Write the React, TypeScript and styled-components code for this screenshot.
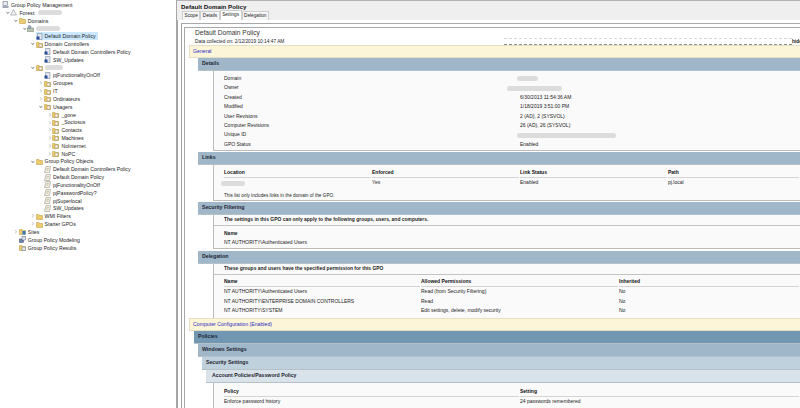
import React from "react";
import styled, { createGlobalStyle } from "styled-components";

const Global = createGlobalStyle`
  html, body { margin: 0; padding: 0; background: #fff; }
  body { font-family: "Liberation Sans", Arial, sans-serif; color: #1c1c1c; }
`;

const Shell = styled.div`
  display: flex;
  width: 800px;
  height: 408px;
  overflow: hidden;
`;

/* ---------- left tree ---------- */
const Tree = styled.div`
  flex: 0 0 176px;
  padding-top: 1px;
  border-right: 1px solid #a6a6a6;
  background: #fff;
`;

const Row = styled.div<{ $level: number }>`
  display: flex;
  align-items: center;
  height: 7.84px;
  padding-left: ${(p) => p.$level * 8.4 + 2}px;
  font-size: 5.2px;
  white-space: nowrap;
`;

const Chevron = styled.svg`
  flex: 0 0 5.6px;
  width: 5.6px;
  height: 5.6px;
  margin-left: -5.6px;
`;

const Label = styled.div<{ $selected?: boolean }>`
  display: flex;
  align-items: center;
  gap: 2px;
  height: 7.84px;
  padding-right: 2px;
  background: ${(p) => (p.$selected ? "#cce8ff" : "transparent")};
`;

const Smudge = styled.span<{ $w: number; $x?: number }>`
  display: inline-block;
  width: ${(p) => p.$w}px;
  height: 5px;
  margin-left: ${(p) => p.$x ?? 0}px;
  border-radius: 3px;
  background: #dcdcdc;
  filter: blur(0.7px);
`;

type IconKind = "console" | "forest" | "folder" | "domain" | "ou" | "link" | "gpo" | "sites" | "model" | "result";

const Icon = ({ kind }: { kind: IconKind }) => (
  <svg width="7" height="7" viewBox="0 0 14 14" style={{ flex: "0 0 7px" }}>
    {(kind === "folder" || kind === "ou" || kind === "sites" || kind === "result") && (
      <path d="M1 3h5l1 2h6v8H1z" fill="#eccb6d" stroke="#b8953a" />
    )}
    {kind === "ou" && <rect x="6" y="6" width="6" height="6" fill="#fff" stroke="#8a7a4a" />}
    {kind === "sites" && <rect x="7" y="6" width="6" height="7" fill="#2f78c4" />}
    {kind === "result" && <path d="M6 6h7v7H6z" fill="#e6e9ef" stroke="#5d6f8c" />}
    {kind === "console" && (
      <>
        <rect x="2" y="1" width="9" height="8" fill="#e8ebf0" stroke="#56657c" />
        <path d="M1 12h12" stroke="#43526a" strokeWidth="2" />
      </>
    )}
    {kind === "forest" && <path d="M7 1l6 11H1z" fill="#f1f1f1" stroke="#77808c" />}
    {kind === "domain" && (
      <>
        <path d="M1 6h12v7H1z" fill="#b8c6b4" stroke="#68775f" />
        <circle cx="5" cy="4" r="3" fill="#9fb2c9" stroke="#5d6f8c" />
      </>
    )}
    {kind === "link" && (
      <>
        <path d="M3 1h9v12H3z" fill="#e4e7ee" stroke="#66708a" />
        <rect x="1" y="7" width="6" height="6" fill="#2b4a9b" />
      </>
    )}
    {kind === "gpo" && (
      <>
        <path d="M4 1h9l-2 12H1z" fill="#f3efe0" stroke="#8d8a7d" />
        <path d="M5 5h5M4 8h5" stroke="#a09c8b" />
      </>
    )}
    {kind === "model" && (
      <>
        <rect x="1" y="6" width="8" height="7" fill="#7183a8" stroke="#3a4a6e" />
        <rect x="6" y="1" width="7" height="7" fill="#dfe4ec" stroke="#4f5f80" />
      </>
    )}
  </svg>
);

type Node = { level: number; icon: IconKind; text?: string; chevron?: "open" | "closed"; blur?: number; selected?: boolean };

const nodes: Node[] = [
  { level: 0, icon: "console", text: "Group Policy Management" },
  { level: 1, icon: "forest", text: "Forest:", chevron: "open", blur: 24 },
  { level: 2, icon: "folder", text: "Domains", chevron: "open" },
  { level: 3, icon: "domain", chevron: "open", blur: 24 },
  { level: 4, icon: "link", text: "Default Domain Policy", selected: true },
  { level: 4, icon: "ou", text: "Domain Controllers", chevron: "open" },
  { level: 5, icon: "link", text: "Default Domain Controllers Policy" },
  { level: 5, icon: "link", text: "SW_Updates" },
  { level: 4, icon: "ou", chevron: "open", blur: 18 },
  { level: 5, icon: "link", text: "pjFunctionalityOnOff" },
  { level: 5, icon: "ou", text: "Groupes", chevron: "closed" },
  { level: 5, icon: "ou", text: "IT", chevron: "closed" },
  { level: 5, icon: "ou", text: "Ordinateurs", chevron: "closed" },
  { level: 5, icon: "ou", text: "Usagers", chevron: "open" },
  { level: 6, icon: "ou", text: "_gone", chevron: "closed" },
  { level: 6, icon: "ou", text: "_Sociosus", chevron: "closed" },
  { level: 6, icon: "ou", text: "Contacts", chevron: "closed" },
  { level: 6, icon: "ou", text: "Machines", chevron: "closed" },
  { level: 6, icon: "ou", text: "NoInternet", chevron: "closed" },
  { level: 6, icon: "ou", text: "NoPC", chevron: "closed" },
  { level: 4, icon: "folder", text: "Group Policy Objects", chevron: "open" },
  { level: 5, icon: "gpo", text: "Default Domain Controllers Policy" },
  { level: 5, icon: "gpo", text: "Default Domain Policy" },
  { level: 5, icon: "gpo", text: "pjFunctionalityOnOff" },
  { level: 5, icon: "gpo", text: "pjPasswordPolicy?" },
  { level: 5, icon: "gpo", text: "pjSuperlocal" },
  { level: 5, icon: "gpo", text: "SW_Updates" },
  { level: 4, icon: "folder", text: "WMI Filters", chevron: "closed" },
  { level: 4, icon: "folder", text: "Starter GPOs", chevron: "closed" },
  { level: 2, icon: "sites", text: "Sites", chevron: "closed" },
  { level: 2, icon: "model", text: "Group Policy Modeling" },
  { level: 2, icon: "result", text: "Group Policy Results" },
];

const TreeRow = ({ node }: { node: Node }) => (
  <Row $level={node.level}>
    {node.chevron && (
      <Chevron viewBox="0 0 12 12">
        {node.chevron === "open" ? (
          <path d="M3 4l3 4 3-4" fill="none" stroke="#555" strokeWidth="1.4" />
        ) : (
          <path d="M4 2.5l4 3.5-4 3.5" fill="none" stroke="#aaa" strokeWidth="1.4" />
        )}
      </Chevron>
    )}
    <Label $selected={node.selected}>
      <Icon kind={node.icon} />
      {node.text && <span>{node.text}</span>}
      {node.blur && <Smudge $w={node.blur} />}
    </Label>
  </Row>
);

/* ---------- right pane ---------- */
const Pane = styled.div`
  flex: 1;
  min-width: 0;
  display: flex;
  flex-direction: column;
  border-top: 1px solid #b4b4b4;
`;

const PaneHead = styled.div`
  height: 19px;
  padding: 2px 0 0 4px;
  box-sizing: border-box;
  background: #efefef;
`;

const PaneTitle = styled.div`
  height: 8px;
  font-size: 6.2px;
  font-weight: bold;
  line-height: 7px;
  color: #111;
`;

const Tabs = styled.div`
  display: flex;
  align-items: flex-end;
  height: 9px;
  margin-left: 1px;
`;

const Tab = styled.div<{ $active?: boolean }>`
  height: ${(p) => (p.$active ? 9 : 8)}px;
  padding: 0 1.5px;
  font-size: 4.7px;
  line-height: 8px;
  background: ${(p) => (p.$active ? "#fff" : "#f6f6f6")};
  border: 0.5px solid #cfcfcf;
  border-bottom: none;
`;

const Frame = styled.div`
  flex: 1;
  min-height: 0;
  padding-left: 3px;
  padding-top: 3px;
  background: #fff;
  border-left: 1px solid #a6a6a6;
`;

const OuterBox = styled.div`
  height: 100%;
  padding: 3px 0 0 2px;
  border-top: 1px solid #a8a8a8;
  border-left: 1px solid #a0a0a0;
`;

const InnerBox = styled.div`
  height: 100%;
  padding-left: 4px;
  border-top: 1px solid #a8a8a8;
  border-left: 1px solid #a8a8a8;
`;

const ReportHead = styled.div`
  height: 17px;
  padding-left: 6px;
`;

const ReportTitle = styled.div`
  height: 9px;
  font-size: 6.6px;
  line-height: 9px;
  color: #333;
`;

const Meta = styled.div`
  display: flex;
  height: 8px;
  font-size: 4.8px;
  line-height: 9px;
  white-space: nowrap;
`;

const MetaText = styled.div`
  flex: 0 0 309px;
`;

const MetaRule = styled.div`
  flex: 0 0 288px;
  height: 5px;
  margin-top: 1px;
  border-top: 1px dashed #d8d8d8;
  border-bottom: 1px dashed #8c8c8c;
`;

const MetaLink = styled.b`
  color: #111;
`;

const tones: Record<string, string> = {
  cream: "#fdf5d8",
  deep: "#7297b3",
  mid: "#a0b7c9",
  soft: "#c0d1de",
  pale: "#dae3ea",
};

const Band = styled.div<{ $tone: keyof typeof tones; $x: number; $pad?: number; $h?: number }>`
  height: ${(p) => p.$h ?? 13}px;
  margin-left: ${(p) => p.$x}px;
  padding-left: ${(p) => p.$pad ?? 4}px;
  box-sizing: border-box;
  font-size: 5.2px;
  font-weight: bold;
  line-height: 11px;
  color: #1c2430;
  background: ${(p) => tones[p.$tone]};
  border-bottom: 1px solid #b6c0c8;
`;

const CreamBand = styled(Band)`
  font-weight: normal;
  color: #2a2ac0;
  border: 1px solid #e6dfc4;
  border-right: none;
  padding-left: 3px;
`;

const Body = styled.div<{ $h: number; $top?: number; $open?: boolean }>`
  height: ${(p) => p.$h}px;
  box-sizing: border-box;
  margin-left: 24px;
  padding-top: ${(p) => p.$top ?? 0}px;
  background: #fafafa;
  border-left: 1px solid #bcbcbc;
  border-bottom: ${(p) => (p.$open ? "none" : "1px solid #bcbcbc")};
  overflow: hidden;
`;

const Lead = styled.div`
  height: 10px;
  padding-left: 10px;
  font-size: 4.95px;
  font-weight: bold;
  line-height: 10px;
  border-bottom: 1px solid #c4c4c4;
  white-space: nowrap;
`;

const Grid = styled.div<{ $cols: string }>`
  display: grid;
  grid-template-columns: ${(p) => p.$cols};
  padding-left: 10px;
  font-size: 5px;
  line-height: 9.4px;
  white-space: nowrap;
`;

const Head = styled.div`
  margin-right: 1px;
  font-weight: bold;
  color: #111;
  border-bottom: 1px solid #d4d4d4;
`;

const Cell = styled.div`
  display: flex;
  align-items: center;
  height: 9.4px;
`;

const Note = styled.div`
  padding: 3px 0 0 10px;
  font-size: 4.7px;
  line-height: 9px;
`;

const Gap = styled.div<{ $h: number }>`
  height: ${(p) => p.$h}px;
`;

const detailRows: [string, React.ReactNode][] = [
  ["Domain", <Smudge $w={21} $x={-3} />],
  ["Owner", <Smudge $w={55} $x={-13} />],
  ["Created", "6/30/2013 11:54:36 AM"],
  ["Modified", "1/18/2019 3:51:00 PM"],
  ["User Revisions", "2 (AD), 2 (SYSVOL)"],
  ["Computer Revisions", "26 (AD), 26 (SYSVOL)"],
  ["Unique ID", <Smudge $w={99} $x={-3} />],
  ["GPO Status", "Enabled"],
];

const delegation = [
  ["NT AUTHORITY\\Authenticated Users", "Read (from Security Filtering)", "No"],
  ["NT AUTHORITY\\ENTERPRISE DOMAIN CONTROLLERS", "Read", "No"],
  ["NT AUTHORITY\\SYSTEM", "Edit settings, delete, modify security", "No"],
];

export default function App() {
  return (
    <Shell>
      <Global />
      <Tree>
        {nodes.map((n, i) => (
          <TreeRow key={i} node={n} />
        ))}
      </Tree>
      <Pane>
        <PaneHead>
          <PaneTitle>Default Domain Policy</PaneTitle>
          <Tabs>
            <Tab>Scope</Tab>
            <Tab>Details</Tab>
            <Tab $active>Settings</Tab>
            <Tab>Delegation</Tab>
          </Tabs>
        </PaneHead>
        <Frame>
          <OuterBox>
            <InnerBox>
              <ReportHead>
                <ReportTitle>Default Domain Policy</ReportTitle>
                <Meta>
                  <MetaText>Data collected on: 2/12/2019 10:14:47 AM</MetaText>
                  <MetaRule />
                  <MetaLink>hide all</MetaLink>
                </Meta>
              </ReportHead>

              <CreamBand $tone="cream" $x={0}>General</CreamBand>
              <Band $tone="mid" $x={9}>Details</Band>
              <Body $h={80} $top={3}>
                <Grid $cols="296px 1fr">
                  {detailRows.map(([k, v]) => (
                    <React.Fragment key={k}>
                      <Cell>{k}</Cell>
                      <Cell>{v}</Cell>
                    </React.Fragment>
                  ))}
                </Grid>
              </Body>
              <Gap $h={1} />

              <Band $tone="mid" $x={9}>Links</Band>
              <Body $h={36} $top={3}>
                <Grid $cols="148px 148px 148px 1fr">
                  <Head>Location</Head>
                  <Head>Enforced</Head>
                  <Head>Link Status</Head>
                  <Head>Path</Head>
                  <Cell><Smudge $w={24} $x={-3} /></Cell>
                  <Cell>Yes</Cell>
                  <Cell>Enabled</Cell>
                  <Cell>pj.local</Cell>
                </Grid>
                <Note>This list only includes links in the domain of the GPO.</Note>
              </Body>
              <Gap $h={1} />

              <Band $tone="mid" $x={9} $h={12.5}>Security Filtering</Band>
              <Body $h={34.5} $top={0}>
                <Lead>The settings in this GPO can only apply to the following groups, users, and computers.</Lead>
                <Gap $h={3} />
                <Grid $cols="1fr">
                  <Cell><b>Name</b></Cell>
                  <Cell>NT AUTHORITY\Authenticated Users</Cell>
                </Grid>
              </Body>
              <Gap $h={2} />

              <Band $tone="mid" $x={9}>Delegation</Band>
              <Body $h={54} $open>
                <Lead>These groups and users have the specified permission for this GPO</Lead>
                <Gap $h={2} />
                <Grid $cols="197px 198px 1fr">
                  <Head>Name</Head>
                  <Head>Allowed Permissions</Head>
                  <Head>Inherited</Head>
                  {delegation.map((r) =>
                    r.map((c, i) => <Cell key={r[0] + i}>{c}</Cell>)
                  )}
                </Grid>
              </Body>

              <CreamBand $tone="cream" $x={0}>Computer Configuration (Enabled)</CreamBand>
              <Band $tone="deep" $x={5}>Policies</Band>
              <Band $tone="mid" $x={9}>Windows Settings</Band>
              <Band $tone="soft" $x={13}>Security Settings</Band>
              <Band $tone="pale" $x={17} $pad={6}>Account Policies/Password Policy</Band>
              <Body $h={40} $top={4}>
                <Grid $cols="296px 1fr">
                  <Head>Policy</Head>
                  <Head>Setting</Head>
                  <Cell>Enforce password history</Cell>
                  <Cell>24 passwords remembered</Cell>
                  <Cell>Maximum password age</Cell>
                  <Cell>90 days</Cell>
                </Grid>
              </Body>
            </InnerBox>
          </OuterBox>
        </Frame>
      </Pane>
    </Shell>
  );
}
